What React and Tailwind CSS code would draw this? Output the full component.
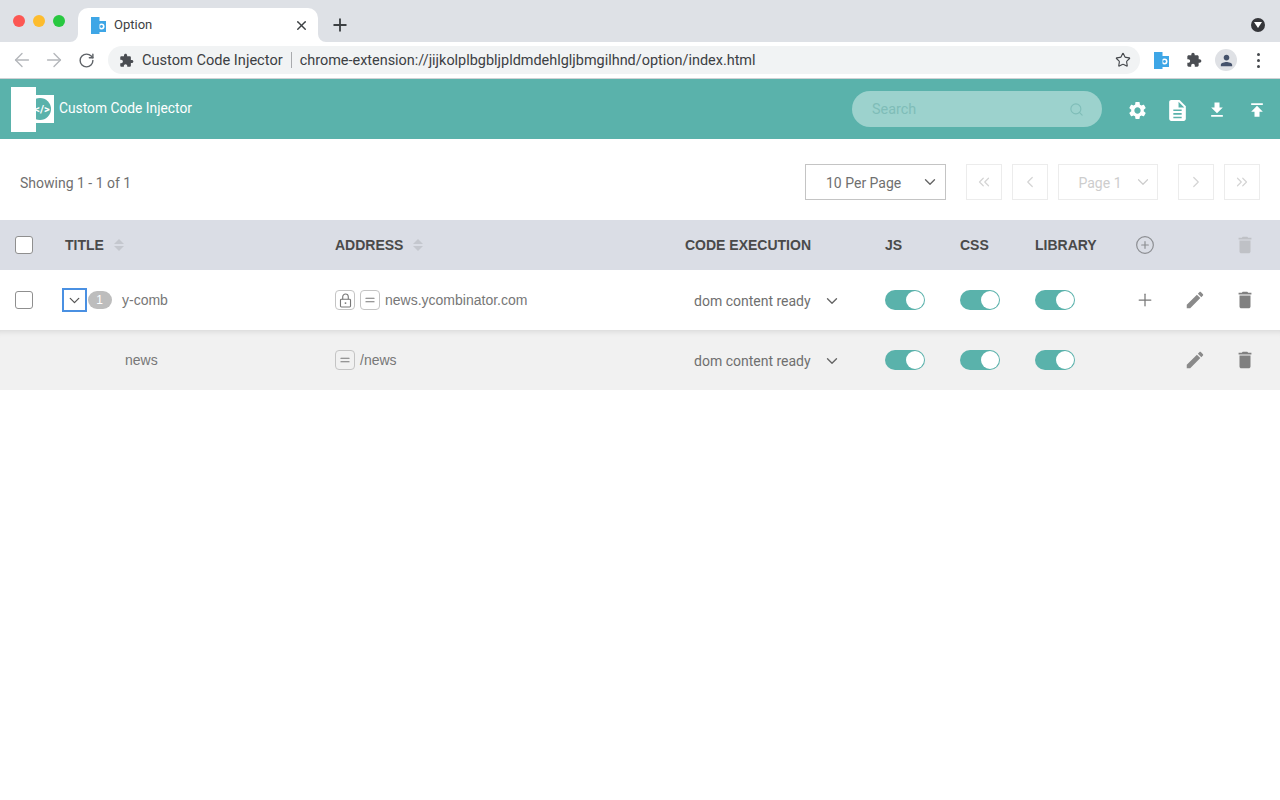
import React from "react";
import {
  ArrowLeft,
  ArrowRight,
  RotateCw,
  Star,
  X,
  Plus,
  ChevronDown,
  ChevronLeft,
  ChevronRight,
  ChevronsLeft,
  ChevronsRight,
  Equal,
  CirclePlus,
  Search,
} from "lucide-react";

const Mi = ({ d, className }) => (
  <svg viewBox="0 0 24 24" fill="currentColor" className={className}>
    <path d={d} />
  </svg>
);

const gear =
  "M19.14 12.94c.04-.3.06-.61.06-.94 0-.32-.02-.64-.07-.94l2.03-1.58c.18-.14.23-.41.12-.61l-1.92-3.32c-.12-.22-.37-.29-.59-.22l-2.39.96c-.5-.38-1.03-.7-1.62-.94l-.36-2.54c-.04-.24-.24-.41-.48-.41h-3.84c-.24 0-.43.17-.47.41l-.36 2.54c-.59.24-1.13.57-1.62.94l-2.39-.96c-.22-.08-.47 0-.59.22L2.74 8.87c-.12.21-.08.47.12.61l2.03 1.58c-.05.3-.09.63-.09.94s.02.64.07.94l-2.03 1.58c-.18.14-.23.41-.12.61l1.92 3.32c.12.22.37.29.59.22l2.39-.96c.5.38 1.03.7 1.62.94l.36 2.54c.05.24.24.41.48.41h3.84c.24 0 .44-.17.47-.41l.36-2.54c.59-.24 1.13-.56 1.62-.94l2.39.96c.22.08.47 0 .59-.22l1.92-3.32c.12-.22.07-.47-.12-.61l-2.01-1.58zM12 15.6c-1.98 0-3.6-1.62-3.6-3.6s1.62-3.6 3.6-3.6 3.6 1.62 3.6 3.6-1.62 3.6-3.6 3.6z";
const doc =
  "M14 2H6c-1.1 0-2 .9-2 2v16c0 1.1.9 2 2 2h12c1.1 0 2-.9 2-2V8l-6-6zm2 17.5H8V18h8v1.5zm0-3.5H8v-1.5h8V16zm0-3.5H8V11h8v1.5zM13 9V3.5L18.5 9H13z";
const download = "M19 9h-4V3H9v6H5l7 7 7-7zM5 18v2h14v-2H5z";
const upload = "M5 4v2h14V4H5zm0 10h4v6h6v-6h4l-7-7-7 7z";
const trash = "M6 19c0 1.1.9 2 2 2h8c1.1 0 2-.9 2-2V7H6v12zM19 4h-3.5l-1-1h-5l-1 1H5v2h14V4z";
const pencil =
  "M3 17.25V21h3.75L17.81 9.94l-3.75-3.75L3 17.25zM20.71 7.04c.39-.39.39-1.02 0-1.41l-2.34-2.34c-.39-.39-1.02-.39-1.41 0l-1.83 1.83 3.75 3.75 1.83-1.83z";
const puzzle =
  "M20.5 11H19V7c0-1.1-.9-2-2-2h-4V3.5C13 2.12 11.88 1 10.5 1S8 2.12 8 3.5V5H4c-1.1 0-1.99.9-1.99 2v3.8H3.5c1.49 0 2.7 1.21 2.7 2.7s-1.21 2.7-2.7 2.7H2V20c0 1.1.9 2 2 2h3.8v-1.5c0-1.49 1.21-2.7 2.7-2.7 1.49 0 2.7 1.21 2.7 2.7V22H17c1.1 0 2-.9 2-2v-4h1.5c1.38 0 2.5-1.12 2.5-2.5S21.88 11 20.5 11z";
const person =
  "M12 12c2.21 0 4-1.79 4-4s-1.79-4-4-4-4 1.79-4 4 1.79 4 4 4zm0 2c-2.67 0-8 1.34-8 4v2h16v-2c0-2.66-5.33-4-8-4z";

const ExtIcon = ({ className }) => (
  <svg viewBox="0 0 15 17" className={className}>
    <rect x="8" y="4" width="7" height="11" fill="#3ea6e6" />
    <circle cx="10.5" cy="9.5" r="3" fill="#fff" />
    <circle cx="10.5" cy="9.5" r="1.4" fill="#3ea6e6" />
    <rect x="0" y="0" width="8.5" height="17" fill="#3ea6e6" />
  </svg>
);

const Logo = () => (
  <svg viewBox="0 0 43 45" className="w-[43px] h-[45px] shrink-0">
    <rect x="0" y="8" width="43" height="28" fill="#fff" />
    <circle cx="29" cy="22" r="11" fill="#5ab2ab" />
    <rect x="0" y="0" width="25" height="45" fill="#fff" />
    <text x="31" y="26" textAnchor="middle" fontSize="11" fontWeight="700" fill="#fff" fontFamily="Roboto, sans-serif">
      &lt;/&gt;
    </text>
  </svg>
);

const LockIcon = () => (
  <svg viewBox="0 0 14 16" fill="none" stroke="currentColor" strokeWidth="1.2" className="w-[13px] h-[15px]">
    <rect x="1.6" y="6.6" width="10.8" height="8.4" rx="1" />
    <path d="M4 6.6V4a3 3 0 0 1 6 0v2.6" />
    <circle cx="7" cy="10.8" r="1" fill="currentColor" stroke="none" />
  </svg>
);

const Toggle = () => (
  <div className="w-[40px] h-[20px] rounded-full bg-[#5ab2ab] flex items-center justify-end pr-[1px]">
    <div className="w-[18px] h-[18px] rounded-full bg-white" />
  </div>
);

const Box = () => <div className="w-[18px] h-[18px] rounded-[3px] border border-[#8f8f8f] bg-white" />;

const Tag = ({ children }) => (
  <span className="w-[20px] h-[20px] rounded-[4px] border border-[#c4c4c4] flex items-center justify-center text-[#777]">
    {children}
  </span>
);

const Sort = () => (
  <span className="flex flex-col gap-[2px] ml-[10px]">
    <span className="w-0 h-0 border-x-[5px] border-x-transparent border-b-[5px] border-b-[#c4c7ce]" />
    <span className="w-0 h-0 border-x-[5px] border-x-transparent border-t-[5px] border-t-[#c4c7ce]" />
  </span>
);

const rowGrid = "grid grid-cols-[65px_270px_350px_200px_75px_75px_100px_50px_50px_45px] items-center";

const Exec = () => (
  <div className="flex items-center pl-[9px] pt-[1px] text-[14px] text-[#6f6f6f] font-['Roboto',sans-serif]">
    <span className="w-[129px] pt-[1px]">dom content ready</span>
    <ChevronDown className="w-[18px] h-[18px] text-[#666]" strokeWidth={1.8} />
  </div>
);

const PageBtn = ({ children }) => (
  <div className="w-[36px] h-[36px] border-[1.5px] border-[#ececec] flex items-center justify-center text-[#d4d4d4]">
    {children}
  </div>
);

const App = () => {
  return (
    <div className="w-full h-[800px] bg-white overflow-hidden font-['Roboto',sans-serif]">
      {/* tab strip */}
      <div className="h-[42px] bg-[#dee1e6] flex items-end">
        <div className="self-center pl-[13px] pr-[13px] flex gap-[8px]">
          <div className="w-[12px] h-[12px] rounded-full bg-[#fc5753]" />
          <div className="w-[12px] h-[12px] rounded-full bg-[#fdbc2e]" />
          <div className="w-[12px] h-[12px] rounded-full bg-[#28c840]" />
        </div>
        <div className="relative w-[240px] h-[34px] bg-white rounded-t-[10px] flex items-center pl-[13px] pr-[9px]">
          <svg viewBox="0 0 8 8" className="absolute -left-[8px] bottom-0 w-[8px] h-[8px]">
            <path d="M8 0V8H0A8 8 0 0 0 8 0z" fill="#fff" />
          </svg>
          <svg viewBox="0 0 8 8" className="absolute -right-[8px] bottom-0 w-[8px] h-[8px]">
            <path d="M0 0V8H8A8 8 0 0 1 0 0z" fill="#fff" />
          </svg>
          <ExtIcon className="w-[15px] h-[17px] shrink-0" />
          <span className="ml-[8px] text-[13px] text-[#3c4043]">Option</span>
          <X className="w-[15px] h-[15px] ml-auto text-[#3c4043]" strokeWidth={2.2} />
        </div>
        <div className="self-center mt-[8px] ml-[12px] w-[20px] flex justify-center">
          <Plus className="w-[20px] h-[20px] text-[#3c4043]" strokeWidth={2.2} />
        </div>
        <div className="self-center mt-[8px] ml-auto mr-[15px] w-[14px] h-[14px] rounded-full bg-[#35363a] flex items-center justify-center">
          <span className="w-0 h-0 border-x-[4px] border-x-transparent border-t-[6px] border-t-white" />
        </div>
      </div>

      {/* toolbar */}
      <div className="h-[37px] bg-white border-b border-[#cfd1d4] flex items-center">
        <div className="w-[108px] shrink-0 flex items-center pl-[11px] gap-[10px]">
          <ArrowLeft className="w-[22px] h-[22px] text-[#b4b7bb]" strokeWidth={1.5} />
          <ArrowRight className="w-[22px] h-[22px] text-[#b4b7bb]" strokeWidth={1.5} />
          <div className="w-[22px] flex justify-center">
            <RotateCw className="w-[17px] h-[17px] text-[#5f6368]" strokeWidth={2} />
          </div>
        </div>
        <div className="w-[1032px] h-[28px] rounded-full bg-[#f1f3f4] flex items-center pl-[11px] pr-[9px] text-[14.6px] text-[#3c4043]">
          <Mi d={puzzle} className="w-[15px] h-[15px] text-[#4a4d52]" />
          <span className="ml-[8px] pt-[2px]">Custom Code Injector</span>
          <span className="ml-[8px] mr-[8px] w-px h-[16px] bg-[#a9abae]" />
          <span className="text-[14.44px] pt-[2px]">chrome-extension://jijkolplbgbljpldmdehlgljbmgilhnd/option/index.html</span>
          <Star className="w-[16px] h-[16px] ml-auto text-[#45484c]" strokeWidth={1.7} />
        </div>
        <div className="flex items-center flex-1 pl-[14px]">
          <ExtIcon className="w-[15px] h-[17px]" />
          <Mi d={puzzle} className="w-[16px] h-[16px] ml-[17px] text-[#4a4d52]" />
          <div className="ml-[13px] w-[22px] h-[22px] rounded-full bg-[#dfe1e5] flex items-center justify-center">
            <Mi d={person} className="w-[17px] h-[17px] text-[#45526b]" />
          </div>
          <div className="ml-[20px] flex flex-col gap-[3px]">
            <span className="w-[3px] h-[3px] rounded-full bg-[#45484c]" />
            <span className="w-[3px] h-[3px] rounded-full bg-[#45484c]" />
            <span className="w-[3px] h-[3px] rounded-full bg-[#45484c]" />
          </div>
        </div>
      </div>

      {/* app header */}
      <div className="h-[60px] bg-[#5ab2ab] flex items-center pl-[11px] pr-[3px]">
        <Logo />
        <span className="ml-[5px] text-[13.8px] text-white -mt-[2px]">Custom Code Injector</span>
        <div className="ml-auto w-[250px] h-[36px] rounded-full bg-[#9cd2cd] flex items-center pl-[20px] pr-[18px]">
          <span className="text-[14.4px] text-[#7fbdb8] pt-[2px]">Search</span>
          <Search className="w-[15px] h-[15px] ml-auto text-[#7fbdb8]" strokeWidth={1.8} />
        </div>
        <div className="ml-[15px] flex items-center text-white mt-[2px]">
          <div className="w-[40px] flex justify-center"><Mi d={gear} className="w-[21px] h-[21px]" /></div>
          <div className="w-[40px] flex justify-center"><Mi d={doc} className="w-[25px] h-[25px]" /></div>
          <div className="w-[40px] flex justify-center"><Mi d={download} className="w-[20px] h-[20px]" /></div>
          <div className="w-[40px] flex justify-center"><Mi d={upload} className="w-[20px] h-[20px]" /></div>
        </div>
      </div>

      {/* pagination */}
      <div className="h-[81px] flex items-center pl-[20px] pr-[20px] pt-[5px]">
        <span className="text-[14px] text-[#6f6f6f] pt-[2px]">Showing 1 - 1 of 1</span>
        <div className="ml-auto w-[141px] h-[36px] border-[1.5px] border-[#c4c4c4] flex items-center pl-[20px] pr-[6px] text-[14px] text-[#6f6f6f]">
          <span className="pt-[2px]">10 Per Page</span>
          <ChevronDown className="w-[18px] h-[18px] ml-auto text-[#666]" strokeWidth={1.8} />
        </div>
        <div className="ml-[20px] flex gap-[10px]">
          <PageBtn><ChevronsLeft className="w-[18px] h-[18px]" strokeWidth={1.6} /></PageBtn>
          <PageBtn><ChevronLeft className="w-[18px] h-[18px]" strokeWidth={1.6} /></PageBtn>
          <div className="w-[100px] h-[36px] border-[1.5px] border-[#ececec] flex items-center pl-[19.5px] pr-[5px] text-[14px] text-[#cdcdcd]">
            <span className="pt-[2px]">Page 1</span>
            <ChevronDown className="w-[18px] h-[18px] ml-auto" strokeWidth={1.6} />
          </div>
        </div>
        <div className="ml-[20px] flex gap-[10px]">
          <PageBtn><ChevronRight className="w-[18px] h-[18px]" strokeWidth={1.6} /></PageBtn>
          <PageBtn><ChevronsRight className="w-[18px] h-[18px]" strokeWidth={1.6} /></PageBtn>
        </div>
      </div>

      {/* table header */}
      <div className={`${rowGrid} h-[50px] bg-[#dadde5] font-['Liberation_Sans',sans-serif] text-[14px] font-bold text-[#4a4a4a]`}>
        <div className="pl-[15px]"><Box /></div>
        <div className="flex items-center">TITLE<Sort /></div>
        <div className="flex items-center">ADDRESS<Sort /></div>
        <div>CODE EXECUTION</div>
        <div>JS</div>
        <div>CSS</div>
        <div>LIBRARY</div>
        <div><CirclePlus className="w-[20px] h-[20px] text-[#8b8d91]" strokeWidth={1.4} /></div>
        <div />
        <div className="-ml-[1px]"><Mi d={trash} className="w-[22px] h-[22px] text-[#bfc1c6]" /></div>
      </div>

      {/* rows */}
      <div className={`${rowGrid} h-[60px] bg-white font-['Liberation_Sans',sans-serif] text-[14px] text-[#777]`}>
        <div className="pl-[15px]"><Box /></div>
        <div className="flex items-center -ml-[3px]">
          <div className="w-[25px] h-[24px] border-2 border-[#4a90e2] flex items-center justify-center">
            <ChevronDown className="w-[17px] h-[17px] text-[#555]" strokeWidth={1.8} />
          </div>
          <span className="ml-[1px] w-[24px] h-[18px] rounded-full bg-[#bdbdbd] text-white text-[12px] flex items-center justify-center pr-[1px]">1</span>
          <span className="ml-[10px]">y-comb</span>
        </div>
        <div className="flex items-center gap-[5px]">
          <Tag><LockIcon /></Tag>
          <Tag><Equal className="w-[14px] h-[14px]" strokeWidth={1.8} /></Tag>
          <span>news.ycombinator.com</span>
        </div>
        <Exec />
        <Toggle />
        <Toggle />
        <Toggle />
        <div><Plus className="w-[20px] h-[20px] text-[#777]" strokeWidth={1.5} /></div>
        <div className="-ml-[1px]"><Mi d={pencil} className="w-[22px] h-[22px] text-[#8a8a8a]" /></div>
        <div className="-ml-[1px]"><Mi d={trash} className="w-[22px] h-[22px] text-[#808080]" /></div>
      </div>
      <div className={`${rowGrid} h-[60px] bg-[#f1f1f1] shadow-[inset_0_7px_6px_-6px_rgba(0,0,0,0.12)] font-['Liberation_Sans',sans-serif] text-[14px] text-[#777]`}>
        <div />
        <div className="pl-[60px]">news</div>
        <div className="flex items-center gap-[5px]">
          <Tag><Equal className="w-[14px] h-[14px]" strokeWidth={1.8} /></Tag>
          <span>/news</span>
        </div>
        <Exec />
        <Toggle />
        <Toggle />
        <Toggle />
        <div />
        <div className="-ml-[1px]"><Mi d={pencil} className="w-[22px] h-[22px] text-[#8a8a8a]" /></div>
        <div className="-ml-[1px]"><Mi d={trash} className="w-[22px] h-[22px] text-[#808080]" /></div>
      </div>
    </div>
  );
};

export default App;
